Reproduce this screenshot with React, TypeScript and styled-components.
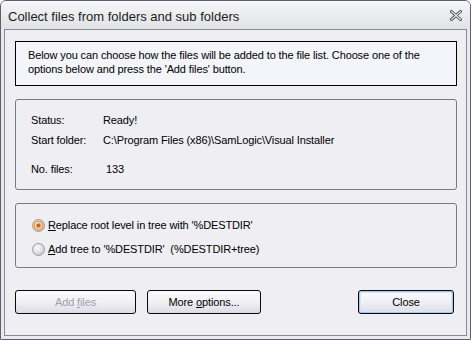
import React from "react";
import styled, { createGlobalStyle } from "styled-components";

const Global = createGlobalStyle`
  html, body { margin: 0; padding: 0; background: #ffffff; }
  body { font-family: "Liberation Sans", Arial, sans-serif; }
`;

const Window = styled.div`
  width: 471px;
  height: 340px;
  box-sizing: border-box;
  border: 1px solid #5b6270;
  border-radius: 6px 6px 0 0;
  background: #e9e9ee;
  display: flex;
  flex-direction: column;
  overflow: hidden;
`;

const TitleBar = styled.div`
  height: 28px;
  flex: none;
  display: flex;
  align-items: center;
  justify-content: space-between;
  padding: 0 8px 0 7px;
  background: linear-gradient(#f6f6f8, #e1e2e6);
`;

const Title = styled.div`
  font-family: "Liberation Sans", Arial, sans-serif;
  font-size: 13px;
  color: #1b1b22;
  padding-top: 2px;
`;

const Frame = styled.div`
  flex: 1;
  display: flex;
  padding: 0 3px 3px 3px;
  background: #e9e9ee;
`;

const Client = styled.div`
  flex: 1;
  border: 1px solid #868b96;
  background: #eeeef3;
  display: flex;
  flex-direction: column;
  padding: 11px 9px 0 10px;
  font-family: "Liberation Sans", Arial, sans-serif;
  font-size: 11px;
  letter-spacing: -0.12px;
  color: #000;
`;

const InfoBox = styled.div`
  height: 45px;
  box-sizing: border-box;
  border: 1px solid #000;
  background: #f4f4fb;
  padding: 6px 12px;
  line-height: 14px;
`;

const Group = styled.div<{ $h: number; $mt: number }>`
  margin-top: ${(p) => p.$mt}px;
  height: ${(p) => p.$h}px;
  box-sizing: border-box;
  border: 1px solid #767b86;
  border-radius: 3px;
  display: flex;
  flex-direction: column;
`;

const StatusGrid = styled.div`
  display: grid;
  grid-template-columns: 72px 1fr;
  padding: 13px 0 0 15px;
`;

const Cell = styled.div<{ $h: number; $dx?: number }>`
  height: ${(p) => p.$h}px;
  line-height: 14px;
  padding-left: ${(p) => p.$dx || 0}px;
`;

const RadioList = styled.div`
  display: flex;
  flex-direction: column;
  gap: 10px;
  padding: 14px 0 0 16px;
`;

const RadioRow = styled.label`
  display: flex;
  align-items: center;
  gap: 3px;
  height: 14px;
  line-height: 14px;
`;

const U = styled.span`
  text-decoration: underline;
`;

const ButtonRow = styled.div`
  margin-top: 22px;
  display: flex;
  align-items: center;
`;

const Button = styled.div<{ $w: number; $disabled?: boolean; $focus?: boolean; $ml?: number; $mr?: number }>`
  width: ${(p) => p.$w}px;
  height: 24px;
  margin-left: ${(p) => p.$ml || 0}px;
  margin-right: ${(p) => p.$mr || 0}px;
  box-sizing: border-box;
  border: 1px solid #0a0a0a;
  border-radius: 3px;
  background: linear-gradient(#fbfbfd, #f0f0f5 50%, #dcdce6);
  display: flex;
  align-items: center;
  justify-content: center;
  color: ${(p) => (p.$disabled ? "#a0a0a8" : "#000")};
  box-shadow: ${(p) => (p.$focus ? "inset 0 0 0 1px #a4c8f0, inset 0 0 0 2px #d6e6f8" : "none")};
`;

const Spacer = styled.div`
  flex: 1;
`;

function Radio({ checked }: { checked?: boolean }) {
  const id = checked ? "rc" : "ru";
  return (
    <svg width="13" height="13" viewBox="0 0 13 13">
      <defs>
        <radialGradient id={id} cx="40%" cy="35%" r="70%">
          <stop offset="0" stopColor="#ffffff" />
          <stop offset="1" stopColor="#c8c8cc" />
        </radialGradient>
      </defs>
      <circle cx="6.5" cy="6.5" r="6" fill={`url(#${id})`} stroke="#9a9aa0" strokeWidth="1" />
      {checked && (
        <>
          <circle cx="6.5" cy="6.5" r="4.3" fill="none" stroke="#f0a040" strokeWidth="1.6" />
          <circle cx="6.5" cy="6.5" r="2.3" fill="#e06010" />
        </>
      )}
    </svg>
  );
}

function CloseIcon() {
  return (
    <svg width="12" height="11" viewBox="0 0 12 11">
      <path d="M1.5 1.5 L10.5 9.5 M10.5 1.5 L1.5 9.5" stroke="#4a4d56" strokeWidth="3" strokeLinecap="square" />
      <path d="M1.5 1.5 L10.5 9.5 M10.5 1.5 L1.5 9.5" stroke="#f4f4f6" strokeWidth="1.1" strokeLinecap="square" />
    </svg>
  );
}

export default function App() {
  return (
    <>
      <Global />
      <Window>
        <TitleBar>
          <Title>Collect files from folders and sub folders</Title>
          <CloseIcon />
        </TitleBar>
        <Frame>
          <Client>
            <InfoBox>
              Below you can choose how the files will be added to the file list. Choose one of the
              <br />
              options below and press the 'Add files' button.
            </InfoBox>
            <Group $h={91} $mt={13}>
              <StatusGrid>
                <Cell $h={20}>Status:</Cell>
                <Cell $h={20}>Ready!</Cell>
                <Cell $h={29}>Start folder:</Cell>
                <Cell $h={29}>C:\Program Files (x86)\SamLogic\Visual Installer</Cell>
                <Cell $h={14}>No. files:</Cell>
                <Cell $h={14} $dx={3}>133</Cell>
              </StatusGrid>
            </Group>
            <Group $h={65} $mt={13}>
              <RadioList>
                <RadioRow>
                  <Radio checked />
                  <span>
                    <U>R</U>eplace root level in tree with '%DESTDIR'
                  </span>
                </RadioRow>
                <RadioRow>
                  <Radio />
                  <span>
                    <U>A</U>dd tree to '%DESTDIR'&nbsp;&nbsp;(%DESTDIR+tree)
                  </span>
                </RadioRow>
              </RadioList>
            </Group>
            <ButtonRow>
              <Button $w={121} $disabled>
                <span>
                  Add <U>f</U>iles
                </span>
              </Button>
              <Button $w={114} $ml={11}>
                <span>
                  More <U>o</U>ptions...
                </span>
              </Button>
              <Spacer />
              <Button $w={96} $focus $mr={3}>
                Close
              </Button>
            </ButtonRow>
          </Client>
        </Frame>
      </Window>
    </>
  );
}
